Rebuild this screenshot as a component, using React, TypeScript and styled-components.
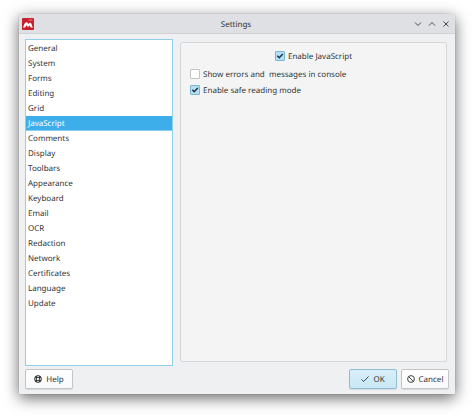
import React, { useState } from "react";
import styled, { createGlobalStyle } from "styled-components";

const GlobalStyle = createGlobalStyle`
  * { box-sizing: border-box; }
  body {
    margin: 0;
    background: #fff;
    color: #313437;
    font-family: "Noto Sans", "Open Sans", sans-serif;
    font-size: 8px;
    line-height: 15px;
    text-rendering: geometricPrecision;
  }
  button, input { font: inherit; color: inherit; text-rendering: inherit; }
`;

const Desktop = styled.div`
  display: flex;
  min-height: 100vh;
  padding: 14px 19px 23px;
`;

const Window = styled.main`
  display: flex;
  flex: 1;
  flex-direction: column;
  background: #eff0f2;
  border-radius: 2px 2px 0 0;
  box-shadow: 0 0 1px rgba(0, 0, 0, 0.4), 0 4px 15px rgba(0, 0, 0, 0.6);
`;

const TitleBar = styled.header`
  display: grid;
  grid-template-columns: 1fr auto 1fr;
  align-items: center;
  height: 20px;
  padding: 1px 5px 0 3px;
  background: #dee0e3;
  border-bottom: 1px solid #d0d2d5;
  border-radius: 2px 2px 0 0;
`;

const Title = styled.h1`
  margin: 0;
  font-size: 8px;
  font-weight: 400;
`;

const WindowControls = styled.div`
  display: flex;
  justify-content: flex-end;
  gap: 6px;
`;

const ControlButton = styled.button`
  display: flex;
  width: 8px;
  height: 8px;
  padding: 0;
  border: 0;
  background: none;
`;

const Content = styled.div`
  display: grid;
  flex: 1;
  grid-template-columns: 148fr 267fr;
  gap: 7px;
  padding: 5px 8px 3px 6px;
`;

const Categories = styled.nav`
  padding-top: 1px;
  background: #fff;
  border: 1px solid #94cfea;
`;

const Category = styled.button<{ $selected: boolean }>`
  display: block;
  width: 100%;
  height: 15px;
  padding: 0 2px;
  border: 0;
  background: ${(p) => (p.$selected ? "#3daee9" : "transparent")};
  box-shadow: ${(p) => (p.$selected ? "inset 0 -1px #8bd0f2" : "none")};
  color: ${(p) => (p.$selected ? "#fff" : "inherit")};
  line-height: 16px;
  text-align: left;
`;

const Panel = styled.section`
  display: flex;
  flex-direction: column;
  align-items: flex-start;
  margin: 3px 0 4px;
  padding: 5px 9px;
  background: #f4f4f4;
  border: 1px solid #d5d7d9;
  border-radius: 2px;
`;

const Option = styled.label<{ $heading?: boolean }>`
  display: flex;
  align-items: center;
  align-self: ${(p) => (p.$heading ? "center" : "flex-start")};
  gap: 3px;
  height: 16px;
  margin-bottom: ${(p) => (p.$heading ? "2px" : "0")};
  white-space: pre;
`;

const Checkbox = styled.input`
  appearance: none;
  width: 10px;
  height: 10px;
  margin: 0;
  background: #fff;
  border: 1px solid #c2c4c6;
  border-radius: 1px;

  &:checked {
    background: #b7def2;
    border-color: #79b5d5;
  }
`;

const CheckCell = styled.span`
  display: grid;
  place-items: center;

  > * { grid-area: 1 / 1; }
  svg { pointer-events: none; }
`;

const Footer = styled.footer`
  display: flex;
  gap: 4px;
  padding: 0 6px 5px;
`;

const ActionButton = styled.button<{ $primary?: boolean }>`
  display: flex;
  align-items: center;
  justify-content: center;
  gap: 4px;
  width: 48px;
  height: 20px;
  padding: 0;
  background: ${(p) => (p.$primary ? "linear-gradient(#d9eefa, #c9e7f5)" : "linear-gradient(#fefefe, #f9f9f9)")};
  border: 1px solid ${(p) => (p.$primary ? "#91bdd2" : "#c3c5c7")};
  border-radius: 2px;
  box-shadow: 0 1px 1px rgba(0, 0, 0, 0.1);
  white-space: nowrap;
`;

const Spacer = styled.div`
  flex: 1;
`;

const AppLogo = () => (
  <svg width="12" height="12" viewBox="0 0 12 12" aria-hidden="true">
    <rect width="12" height="12" rx="1" fill="#c9202d" />
    <path d="M1 9.5C2 7 2.5 4.5 4.5 4.2c1 0 1.5 1.3 2 1.8.6-.8 1.4-1.6 2.3-1 .9.7 1 2.8 2.2 4.5H8.8L7.7 7.4 6.2 9 4.3 7.2 3.2 9.5Z" fill="#fff" />
    <path d="M6.5 2h4" stroke="#e78188" strokeWidth="1" />
  </svg>
);

const controlPaths = {
  Minimize: "M1 2.5 4 5.5 7 2.5",
  Maximize: "M1 5.5 4 2.5 7 5.5",
  Close: "M1.5 1.5 6.5 6.5M6.5 1.5 1.5 6.5",
};

const TickIcon = ({ bold = false }: { bold?: boolean }) => (
  <svg width="8" height="8" viewBox="0 0 8 8" fill="none" stroke={bold ? "#17374c" : "#3c474d"} strokeWidth={bold ? 1.6 : 1} aria-hidden="true">
    <path d={bold ? "M1.3 3.8 3.2 5.7 6.8 2" : "M.5 4.5 2.7 6.5 7.5 1.5"} />
  </svg>
);

const HelpIcon = () => (
  <svg width="8" height="8" viewBox="0 0 8 8" fill="none" aria-hidden="true">
    <circle cx="4" cy="4" r="3.4" stroke="#303336" strokeWidth="1" />
    <circle cx="4" cy="4" r="1.6" stroke="#303336" strokeWidth=".8" />
    <path d="M1.5 1.5 3 3M5 3l1.5-1.5M5 5l1.5 1.5M3 5 1.5 6.5" stroke="#303336" strokeWidth="2" />
  </svg>
);

const CancelIcon = () => (
  <svg width="8" height="8" viewBox="0 0 8 8" fill="none" stroke="#424548" strokeWidth="1" aria-hidden="true">
    <circle cx="4" cy="4" r="3.4" />
    <path d="m1.6 1.6 4.8 4.8" />
  </svg>
);

const categories = [
  "General", "System", "Forms", "Editing", "Grid", "JavaScript",
  "Comments", "Display", "Toolbars", "Appearance", "Keyboard", "Email",
  "OCR", "Redaction", "Network", "Certificates", "Language", "Update",
];

interface CheckOptionProps {
  label: string;
  initial?: boolean;
  heading?: boolean;
}

const CheckOption = ({ label, initial = false, heading }: CheckOptionProps) => {
  const [checked, setChecked] = useState(initial);
  return (
    <Option $heading={heading}>
      <CheckCell>
        <Checkbox type="checkbox" checked={checked} onChange={() => setChecked(!checked)} />
        {checked && <TickIcon bold />}
      </CheckCell>
      {label}
    </Option>
  );
};

export default function App() {
  const [selected, setSelected] = useState("JavaScript");
  return (
    <>
      <GlobalStyle />
      <Desktop>
        <Window>
          <TitleBar>
            <AppLogo />
            <Title>Settings</Title>
            <WindowControls>
              {Object.entries(controlPaths).map(([name, path]) => (
                <ControlButton key={name} type="button" aria-label={name}>
                  <svg width="8" height="8" viewBox="0 0 8 8" fill="none" stroke="#4a4d50" strokeWidth="1">
                    <path d={path} />
                  </svg>
                </ControlButton>
              ))}
            </WindowControls>
          </TitleBar>
          <Content>
            <Categories aria-label="Settings categories">
              {categories.map((name) => (
                <Category
                  key={name}
                  type="button"
                  $selected={name === selected}
                  aria-current={name === selected}
                  onClick={() => setSelected(name)}
                >
                  {name}
                </Category>
              ))}
            </Categories>
            <Panel>
              <CheckOption label="Enable JavaScript" initial heading />
              <CheckOption label="Show errors and  messages in console" />
              <CheckOption label="Enable safe reading mode" initial />
            </Panel>
          </Content>
          <Footer>
            <ActionButton type="button"><HelpIcon />Help</ActionButton>
            <Spacer />
            <ActionButton type="button" $primary><TickIcon />OK</ActionButton>
            <ActionButton type="button"><CancelIcon />Cancel</ActionButton>
          </Footer>
        </Window>
      </Desktop>
    </>
  );
}
